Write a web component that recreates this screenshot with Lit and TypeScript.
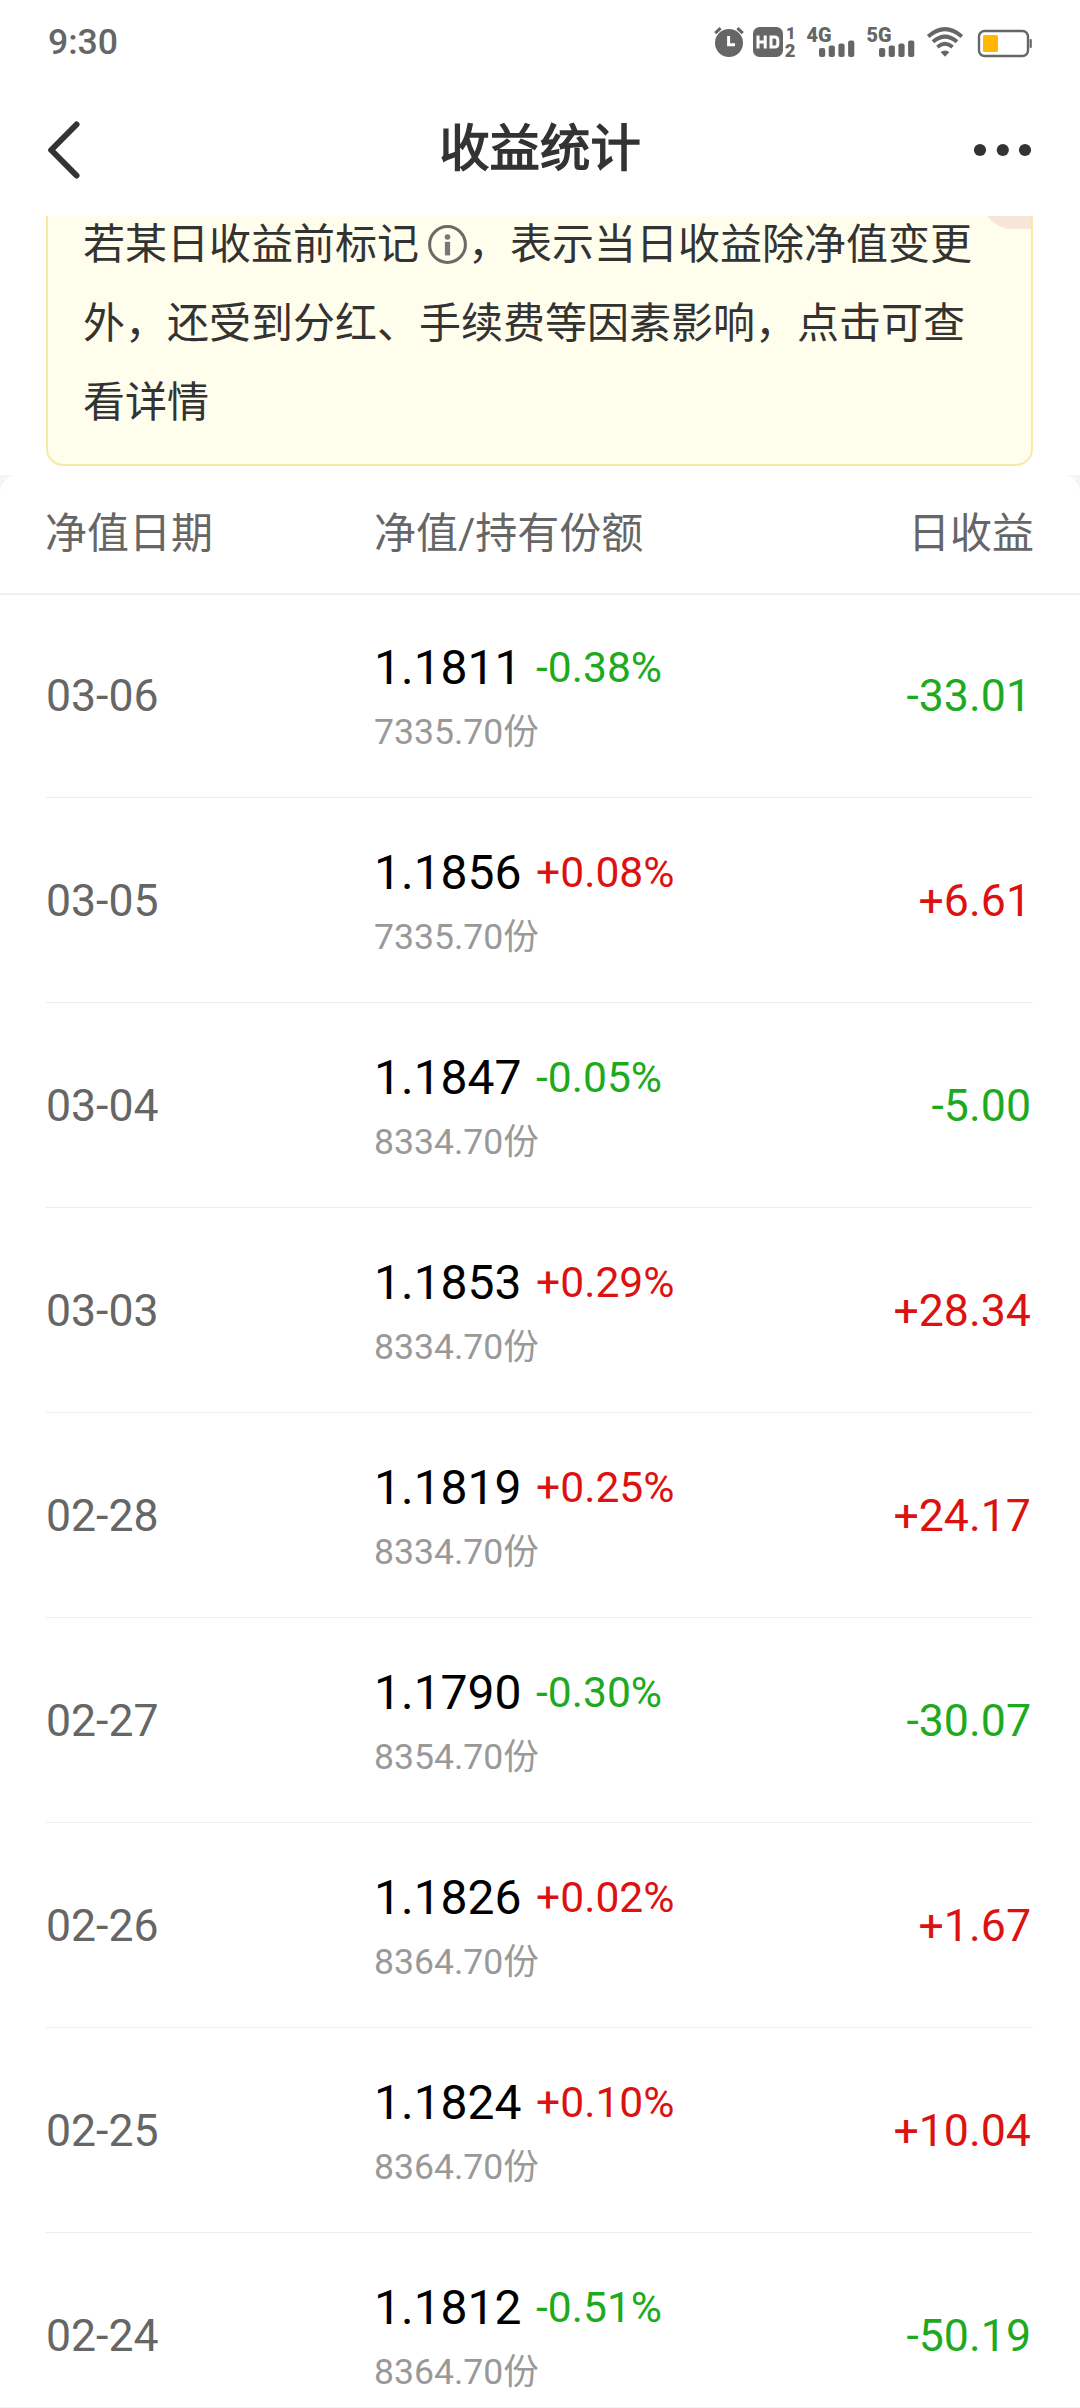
import { LitElement, html, svg, css } from "lit";
import { customElement, property } from "lit/decorators.js";
import { classMap } from "lit/directives/class-map.js";

interface Row {
  date: string;
  nav: string;
  change: string;
  share: string;
  profit: string;
}

const ROWS: Row[] = [
  { date: "03-06", nav: "1.1811", change: "-0.38%", share: "7335.70", profit: "-33.01" },
  { date: "03-05", nav: "1.1856", change: "+0.08%", share: "7335.70", profit: "+6.61" },
  { date: "03-04", nav: "1.1847", change: "-0.05%", share: "8334.70", profit: "-5.00" },
  { date: "03-03", nav: "1.1853", change: "+0.29%", share: "8334.70", profit: "+28.34" },
  { date: "02-28", nav: "1.1819", change: "+0.25%", share: "8334.70", profit: "+24.17" },
  { date: "02-27", nav: "1.1790", change: "-0.30%", share: "8354.70", profit: "-30.07" },
  { date: "02-26", nav: "1.1826", change: "+0.02%", share: "8364.70", profit: "+1.67" },
  { date: "02-25", nav: "1.1824", change: "+0.10%", share: "8364.70", profit: "+10.04" },
  { date: "02-24", nav: "1.1812", change: "-0.51%", share: "8364.70", profit: "-50.19" },
];

@customElement("status-bar")
export class StatusBar extends LitElement {
  static styles = css`
    :host {
      display: flex;
      justify-content: space-between;
      align-items: center;
      height: 84px;
      padding: 0 48px;
      box-sizing: border-box;
      color: #666;
    }
    .time {
      font-size: 35.6px;
      font-weight: 500;
      line-height: 84px;
    }
    .icons {
      display: flex;
      align-items: center;
    }
    svg {
      display: block;
      overflow: visible;
      font-family: Roboto, sans-serif;
      font-weight: 900;
    }
    .alarm { margin-right: 9px; }
    .hd { margin-right: 11px; }
    .signal { margin-right: 12px; }
    .wifi { margin-right: 14px; }
  `;

  private signal(label: string) {
    return html`<svg class="signal" width="48" height="32" viewBox="0 0 48 32" fill="#666">
      <text x="-0.5" y="15.8" font-size="21" textLength="25" lengthAdjust="spacingAndGlyphs">${label}</text>
      ${[22, 19.5, 17.5, 14.5].map(
        (y, i) => svg`<rect x=${12 + i * 9.7} y=${y} width="6.2" height=${31 - y} rx="2" />`,
      )}
    </svg>`;
  }

  render() {
    return html`
      <div class="time">9:30</div>
      <div class="icons">
        <svg class="alarm" width="30" height="32" viewBox="0 0 30 32">
          <circle cx="15" cy="17" r="14" fill="#666" />
          <path d="M1.2 7.2 L6.6 2.2 M28.8 7.2 L23.4 2.2" stroke="#666" stroke-width="3.2" />
          <path d="M14.6 10 V18.8 H21" fill="none" stroke="#fff" stroke-width="3" />
        </svg>
        <svg class="hd" width="43" height="32" viewBox="0 0 43 32">
          <rect x="0" y="1" width="30" height="30" rx="6.5" fill="#666" />
          <path d="M5 9.5V22.5M12.2 9.5V22.5M5 16H12.2" stroke="#fff" stroke-width="3" fill="none" />
          <path d="M18 11H21.5Q24.8 11 24.8 14V18Q24.8 21 21.5 21H18Z" stroke="#fff" stroke-width="3" fill="none" />
          <text x="33" y="13" font-size="16.5" fill="#666">1</text>
          <text x="31.8" y="30.8" font-size="18.5" fill="#666">2</text>
        </svg>
        ${this.signal("4G")} ${this.signal("5G")}
        <svg class="wifi" width="36" height="32" viewBox="0 0 36 32" fill="none" stroke="#666">
          <path d="M1.2 10.4Q18 -4.2 34.8 10.4" stroke-width="4" />
          <path d="M6 15.8Q18 5.4 30 15.8" stroke-width="4" />
          <path d="M10.4 21Q18 14.6 25.6 21" stroke-width="3.8" />
          <path d="M13.6 26Q18 22.8 22.4 26L18 30.8Z" fill="#666" stroke="none" />
        </svg>
        <svg width="55" height="32" viewBox="0 0 55 32">
          <rect x="2" y="5" width="49" height="25" rx="5.5" fill="none" stroke="#666" stroke-width="2.4" />
          <rect x="6" y="9" width="15" height="17" rx="1.5" fill="#ffb700" />
          <rect x="52.6" y="13" width="2.2" height="9" rx="1" fill="#666" />
        </svg>
      </div>
    `;
  }
}

@customElement("nav-bar")
export class NavBar extends LitElement {
  static styles = css`
    :host {
      display: grid;
      grid-template-columns: 60px 1fr 60px;
      align-items: center;
      height: 132px;
      padding: 0 46px;
      box-sizing: border-box;
      color: #333;
    }
    .title {
      font-size: 50.4px;
      -webkit-text-stroke: 1.5px #333;
      line-height: 74px;
      text-align: center;
      padding: 0 0 3px;
    }
    svg { display: block; }
    .more { justify-self: end; margin-right: 1px; }
  `;

  render() {
    return html`
      <svg width="36" height="60" viewBox="0 0 36 60">
        <path d="M30.5 4.5L5.2 30L30.5 55.5" fill="none" stroke="#333" stroke-width="6" stroke-linecap="round" stroke-linejoin="round" />
      </svg>
      <div class="title">收益统计</div>
      <svg class="more" width="60" height="14" viewBox="0 0 60 14" fill="#333">
        <circle cx="7" cy="7" r="6.1" />
        <circle cx="29.8" cy="7" r="6.1" />
        <circle cx="52" cy="7" r="6.1" />
      </svg>
    `;
  }
}

@customElement("income-notice")
export class IncomeNotice extends LitElement {
  static styles = css`
    :host {
      display: flex;
      flex-direction: column;
      justify-content: flex-end;
      height: 259px;
      padding: 0 47px 9px 46px;
      box-sizing: border-box;
      overflow: hidden;
    }
    .box {
      position: relative;
      flex: none;
      height: 300px;
      box-sizing: border-box;
      display: flex;
      flex-direction: column;
      justify-content: flex-end;
      padding: 0 35px 22.5px;
      border: 2px solid #f8eaa6;
      border-radius: 17px;
      background: #fffeec;
      color: #333;
      font-size: 42px;
      line-height: 79px;
    }
    .badge {
      position: absolute;
      top: 0;
      right: 0;
      width: 49px;
      height: 61px;
      border-bottom-left-radius: 30px;
      background: #f7e6d8;
    }
    .text { position: relative; white-space: nowrap; }
    svg {
      width: 39px;
      height: 39px;
      margin: 0 1px 0 9px;
      vertical-align: -5px;
    }
  `;

  render() {
    return html`<div class="box">
      <div class="badge"></div>
      <div class="text">若某日收益前标记<svg viewBox="0 0 39 39"><circle cx="19.5" cy="19.5" r="17.9" fill="none" stroke="#6b6b66" stroke-width="3" /><circle cx="19.5" cy="12" r="2.8" fill="#777" /><rect x="16.9" y="16.8" width="5.2" height="13.6" fill="#777" /></svg>，表示当日收益除净值变更<br />外，还受到分红、手续费等因素影响，点击可查<br />看详情</div>
    </div>`;
  }
}

@customElement("income-row")
export class IncomeRow extends LitElement {
  @property({ attribute: false }) row!: Row;

  static styles = css`
    :host {
      display: grid;
      grid-template-columns: 328px 1fr auto;
      align-items: center;
      height: 205px;
      box-sizing: border-box;
      border-bottom: 1px solid #ededed;
      line-height: 1;
      white-space: nowrap;
    }
    .date {
      font-size: 44.6px;
      padding-top: 2px;
      color: #666;
    }
    .middle { padding-top: 6px; }
    .first {
      display: flex;
      align-items: center;
      gap: 14.5px;
    }
    .nav {
      font-size: 48px;
      line-height: 60px;
      color: #000;
    }
    .change {
      font-size: 42.6px;
      padding-bottom: 2px;
    }
    .share {
      margin-top: 8px;
      font-size: 35.6px;
      line-height: 52px;
      color: #999;
    }
    .profit {
      font-size: 44.7px;
      padding: 2px 2px 0 0;
    }
    .up { color: #dc1210; }
    .down { color: #1eaa1e; }
  `;

  private tone(value: string) {
    return { up: value.startsWith("+"), down: value.startsWith("-") };
  }

  render() {
    const r = this.row;
    return html`
      <div class="date">${r.date}</div>
      <div class="middle">
        <div class="first">
          <span class="nav">${r.nav}</span>
          <span class=${classMap({ change: true, ...this.tone(r.change) })}>${r.change}</span>
        </div>
        <div class="share">${r.share}份</div>
      </div>
      <div class=${classMap({ profit: true, ...this.tone(r.profit) })}>${r.profit}</div>
    `;
  }
}

@customElement("app-root")
export class AppRoot extends LitElement {
  static styles = css`
    :host {
      display: block;
      height: 2408px;
      overflow: hidden;
      background: #fff;
      font-family: Roboto, "Noto Sans CJK SC", sans-serif;
    }
    .sheet {
      background: #f5f5f5;
    }
    .panel {
      display: flex;
      flex-direction: column;
      height: 1933px;
      box-sizing: border-box;
      overflow: hidden;
      border-radius: 18px 18px 0 0;
      background: #fff;
      border-bottom: 1px solid #f3f3f3;
    }
    .head {
      flex: none;
      display: grid;
      grid-template-columns: 329px 1fr auto;
      align-items: center;
      height: 120px;
      padding: 0 46px 1px 45px;
      box-sizing: border-box;
      border-bottom: 2px solid #efefef;
      font-size: 42px;
      line-height: 62px;
      color: #666;
    }
    .list {
      display: flex;
      flex-direction: column;
      padding: 0 47px 0 46px;
      margin-top: -2px;
    }
    income-row { flex: none; }
  `;

  render() {
    return html`
      <status-bar></status-bar>
      <nav-bar></nav-bar>
      <income-notice></income-notice>
      <div class="sheet">
        <div class="panel">
          <div class="head">
            <span>净值日期</span>
            <span>净值/持有份额</span>
            <span>日收益</span>
          </div>
          <div class="list">
            ${ROWS.map((row) => html`<income-row .row=${row}></income-row>`)}
          </div>
        </div>
      </div>
    `;
  }
}
